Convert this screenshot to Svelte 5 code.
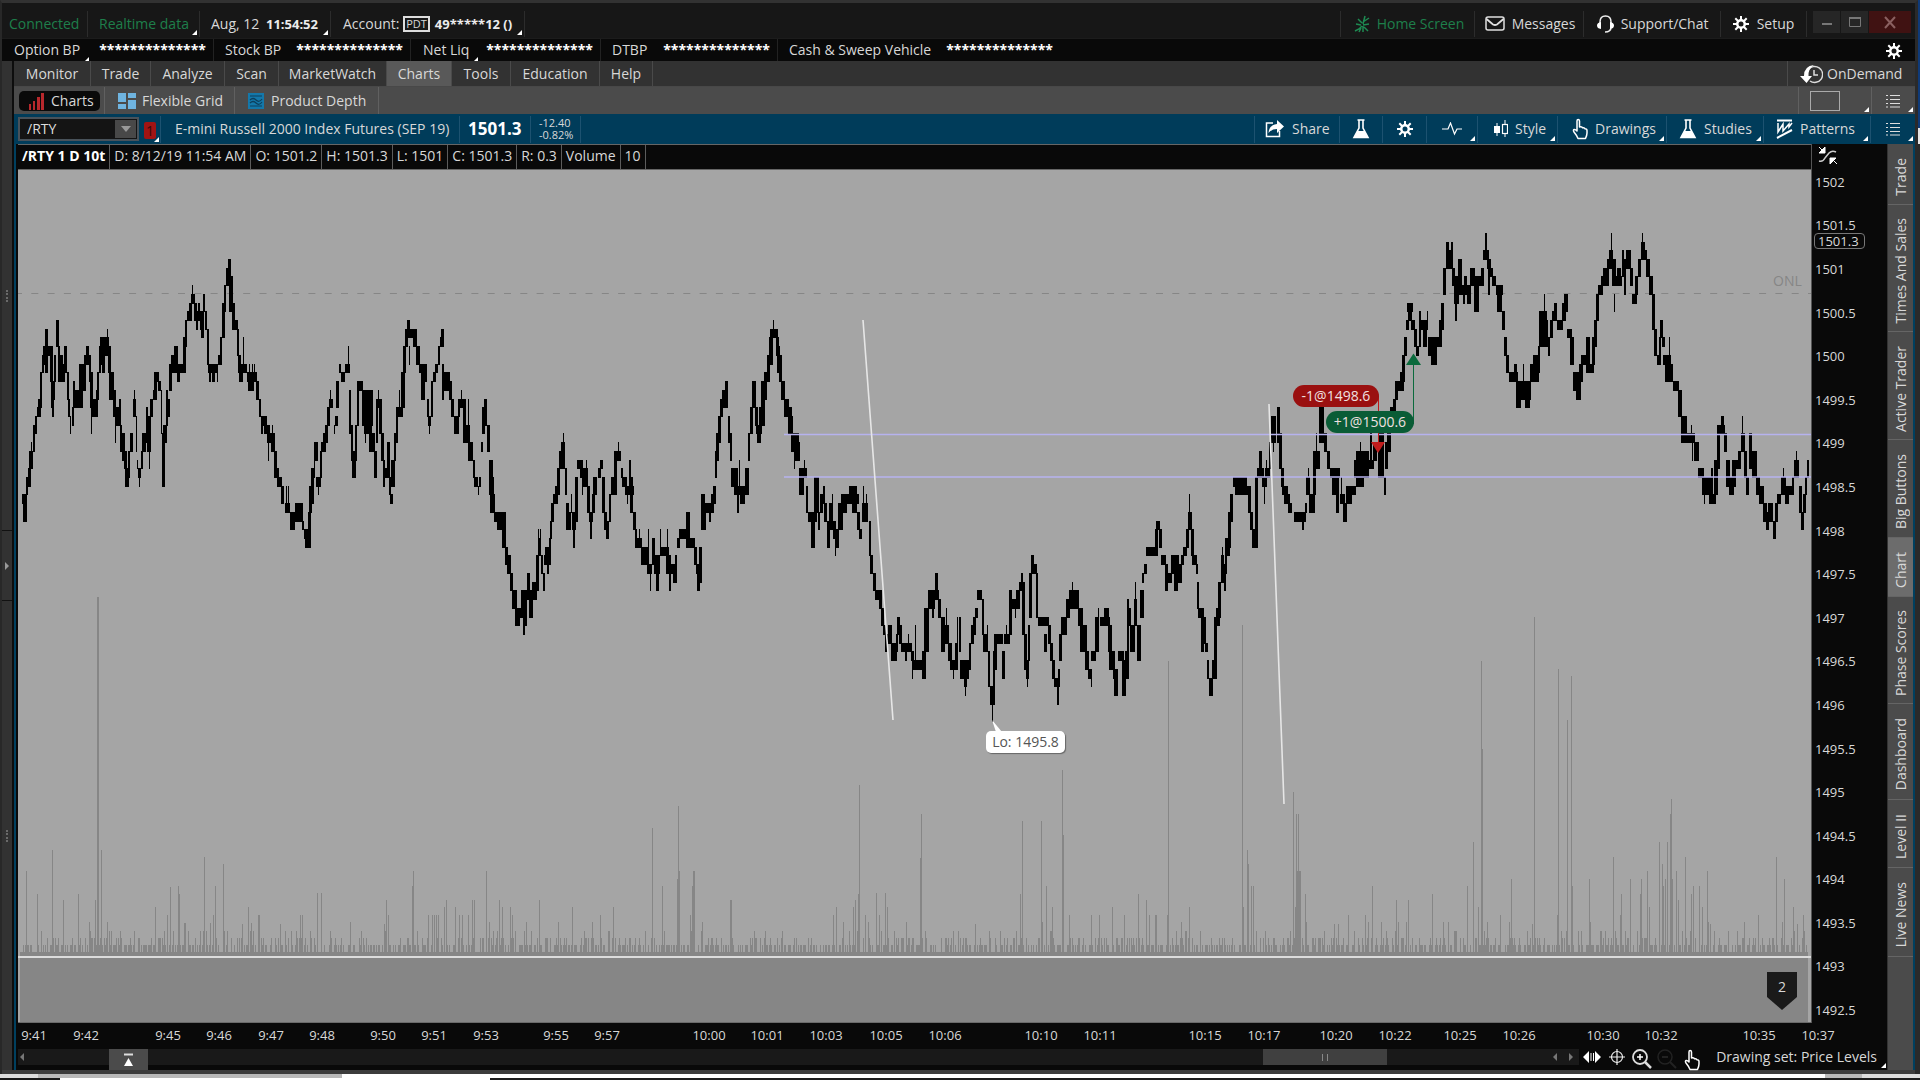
<script>
  const VIEW = { x: 18, y: 170, w: 1793, h: 853 };
  const MASK = '**************';

  // Price runs: left, right, high, low. Prices are tenths of a point above 1490.
  const RUNS = `
22 27 84 83,23 27 84 81,26 28 86 84,28 31 87 85,29 33 89 87,31 32 90 89,33 35 92 89,35 37 93 91,37 40 94 93,38 41 95 93,40 42 98 94,42 44 100 98,43 46 101 99,45 48 103 98,48 52 101 100,50 53 101 97,51 53 97 94,52 54 95 93,53 55 97 95,54 56 100 97,56 59 104 101,58 60 101 97,60 63 100 97,62 65 99 97,64 67 101 98,67 69 98 95,68 70 95 93,70 71 93 91,72 74 94 92,73 75 97 94,75 80 96 94,79 83 99 94,82 86 99 96,84 88 100 99,86 89 101 99,89 91 100 97,90 93 98 94,91 92 94 91,91 97 95 93,96 98 96 93,97 99 98 95,99 101 101 98,100 104 102 99,102 105 101 98,103 109 102 100,107 108 103 101,108 111 101 98,109 114 98 95,113 116 96 93,115 116 93 90,116 119 94 92,119 121 95 92,120 122 92 89,122 125 91 88,124 127 89 87,125 129 87 85,128 130 89 86,130 133 91 89,133 136 95 93,134 135 96 93,136 137 93 89,137 138 88 87,138 141 87 86,139 140 86 85,141 143 89 87,142 146 91 89,146 148 94 90,147 151 93 89,149 150 89 87,150 153 95 93,153 155 96 95,154 157 98 95,156 159 98 97,158 161 97 96,161 162 96 91,162 165 91 85,163 167 92 90,166 168 96 92,167 170 95 93,169 172 99 96,171 175 100 98,174 178 101 98,177 180 99 97,180 185 99 98,183 186 102 98,185 187 104 101,187 190 105 104,189 192 106 104,191 195 107 106,192 193 108 107,194 197 106 104,196 198 105 103,198 200 106 104,200 204 105 103,201 204 103 102,203 205 107 105,205 207 105 103,207 209 103 99,208 211 99 98,209 211 98 97,210 218 99 98,212 215 98 97,217 218 98 97,218 220 100 99,220 222 102 99,222 225 106 102,224 226 108 105,226 229 110 108,228 231 111 109,229 233 109 105,232 235 106 103,234 238 104 103,237 239 103 100,238 241 100 98,239 243 99 97,243 244 102 98,243 247 99 98,247 257 98 97,248 254 98 96,249 250 99 98,252 253 99 98,254 255 99 98,256 259 97 95,259 261 95 93,261 263 93 91,262 267 93 92,264 270 92 91,267 275 91 90,268 269 91 88,272 273 92 91,271 275 91 89,274 277 89 86,275 279 87 86,277 282 86 85,281 284 85 83,286 287 85 83,288 289 85 83,285 290 83 82,290 295 82 80,295 303 83 81,302 304 81 80,304 306 80 79,305 311 80 78,308 311 82 79,309 312 85 82,311 314 87 83,314 315 90 86,315 318 90 88,316 321 86 85,318 319 86 84,320 322 89 86,321 326 90 89,323 326 91 89,325 328 92 90,327 330 94 92,329 333 95 94,330 331 96 94,334 335 92 91,335 338 93 92,336 339 97 94,339 341 99 98,341 345 98 97,345 350 99 98,348 349 101 98,349 351 96 91,351 353 92 88,352 356 89 86,355 357 92 88,357 359 97 92,358 363 97 96,362 373 96 92,364 371 92 91,365 366 91 90,369 372 92 89,372 375 91 89,374 377 89 86,376 378 95 90,378 379 96 94,379 382 95 91,381 384 91 88,383 385 88 85,385 389 87 86,387 390 90 86,389 391 86 84,390 393 84 83,391 395 88 85,394 396 91 88,396 398 94 90,398 403 94 93,399 400 96 94,401 405 98 94,403 406 101 98,405 408 103 101,407 410 104 102,409 415 103 102,409 410 101 99,413 417 103 101,416 420 101 99,419 427 99 98,421 425 98 95,424 427 98 97,427 429 95 93,428 431 93 92,429 430 92 91,431 433 97 93,433 436 98 97,435 438 99 98,438 440 101 99,440 443 102 101,441 444 103 101,442 444 99 95,444 450 98 96,449 452 97 95,451 454 95 93,454 459 93 91,458 460 95 93,460 465 95 94,461 462 96 94,463 466 95 90,466 470 92 90,468 469 95 92,468 473 90 88,473 475 88 86,474 478 86 85,478 479 85 84,479 481 86 85,481 483 90 89,482 485 94 91,484 487 95 92,487 490 92 89,489 493 88 84,490 494 86 82,492 495 84 82,494 499 82 81,497 501 82 80,499 506 82 80,502 506 80 78,505 508 78 76,507 511 77 75,510 513 75 73,512 515 73 71,515 517 73 69,517 520 71 69,519 524 71 70,521 527 73 71,523 525 70 68,524 527 71 69,527 530 75 72,529 533 73 70,532 537 74 72,536 539 77 73,538 541 79 77,538 539 80 78,540 541 80 78,541 543 77 75,543 545 75 73,544 547 77 76,545 551 78 76,547 549 76 75,549 551 79 77,550 552 81 79,551 554 83 81,553 557 84 83,555 558 85 83,557 560 87 84,559 562 89 87,561 565 90 87,563 564 91 90,565 567 87 84,566 569 83 80,568 571 82 80,571 572 84 82,572 576 82 80,573 575 80 78,575 578 86 81,577 583 88 87,580 583 88 86,582 588 87 85,586 587 88 87,582 583 85 84,587 590 85 82,589 593 82 81,590 592 81 79,592 595 84 82,593 597 86 84,598 601 87 86,600 603 88 87,602 605 86 82,604 607 82 80,606 609 81 79,609 611 84 81,611 615 86 84,614 617 89 84,615 621 89 88,618 619 90 89,621 623 87 86,622 627 86 85,625 634 85 84,630 633 86 84,629 631 88 85,627 628 84 83,630 633 84 82,633 636 82 80,635 637 80 78,637 642 79 78,639 640 80 79,641 649 78 76,648 649 80 78,647 652 76 75,650 651 75 73,652 655 79 76,654 660 77 75,656 659 75 73,660 661 80 77,661 669 78 77,667 668 80 77,666 671 77 75,668 677 76 75,669 671 75 73,673 677 75 74,675 677 77 75,677 680 79 78,679 687 80 79,686 690 82 78,689 695 79 78,694 697 78 76,696 701 76 75,697 700 75 73,699 702 78 74,701 705 84 80,703 712 83 82,705 706 82 80,709 711 82 81,711 714 84 82,713 716 85 83,715 717 89 86,716 719 91 88,718 721 93 90,720 723 95 93,722 726 96 94,725 728 97 94,728 730 93 90,730 732 91 88,731 735 87 85,734 738 87 84,739 740 88 85,737 741 85 84,737 739 84 82,740 745 85 83,745 749 87 84,748 750 91 88,750 753 94 91,752 756 97 94,755 758 94 92,756 762 92 91,757 761 92 90,759 761 94 92,761 765 97 92,764 767 98 95,767 770 100 97,769 773 102 99,770 778 103 102,773 774 104 102,776 779 102 100,777 779 100 98,779 782 100 97,779 780 101 100,781 785 97 95,784 789 95 93,787 792 94 93,788 793 93 91,791 799 91 89,794 800 90 88,794 795 88 87,799 807 87 86,804 805 88 87,799 804 86 84,806 808 85 82,808 815 82 81,811 815 81 78,814 817 86 81,817 819 86 82,818 820 82 80,820 823 84 82,823 825 85 83,824 827 83 81,827 830 81 78,829 833 83 80,832 833 84 82,833 836 81 79,835 836 79 77,836 839 80 78,838 843 83 80,841 847 84 82,846 859 84 83,849 857 85 83,852 857 83 82,857 860 82 80,859 862 80 79,862 868 83 81,863 864 85 83,866 867 84 82,869 871 81 77,870 873 77 75,873 876 75 73,875 880 73 72,879 882 73 71,881 884 71 69,883 886 69 68,885 888 68 66,888 892 69 67,891 897 67 65,896 898 68 66,897 900 70 68,899 902 69 67,901 912 67 66,905 907 66 65,908 909 68 67,911 914 66 65,912 917 65 64,915 916 69 65,917 924 65 64,912 913 64 63,922 926 66 63,924 929 71 66,928 935 73 71,932 934 71 70,933 939 73 72,935 938 75 72,938 941 72 70,941 945 70 66,944 949 69 67,946 947 71 69,948 952 67 65,950 955 65 64,953 954 64 63,955 958 67 64,957 958 70 67,959 961 70 66,960 969 65 63,964 967 63 62,965 966 62 61,969 971 67 64,971 974 69 67,973 976 70 68,975 978 71 70,977 982 73 72,982 984 72 68,983 988 68 66,987 988 69 67,988 990 66 62,990 993 62 60,992 993 60 58,993 995 66 60,994 997 68 64,996 1003 68 67,1002 1005 66 63,1004 1010 68 67,1006 1007 69 68,1009 1012 73 68,1011 1017 72 71,1015 1016 71 70,1016 1020 73 71,1019 1022 74 73,1021 1023 75 74,1022 1025 74 68,1024 1027 68 64,1026 1029 65 63,1027 1028 63 62,1028 1030 69 65,1029 1032 75 70,1031 1034 77 75,1033 1037 76 75,1036 1038 75 70,1038 1049 70 69,1044 1047 68 66,1048 1051 69 67,1050 1053 67 65,1052 1055 65 63,1054 1058 63 62,1057 1059 62 60,1058 1060 64 62,1059 1062 68 65,1061 1067 70 68,1066 1070 72 70,1069 1079 73 71,1072 1073 74 73,1078 1083 71 69,1080 1082 69 66,1082 1087 69 66,1085 1089 66 64,1088 1092 64 63,1091 1092 63 62,1091 1096 66 65,1095 1099 70 66,1098 1099 71 70,1100 1110 70 69,1104 1109 71 69,1108 1112 69 66,1109 1115 66 64,1113 1115 64 63,1114 1118 64 61,1118 1124 66 65,1122 1126 65 61,1125 1129 66 63,1127 1129 72 66,1129 1131 71 69,1130 1135 69 66,1134 1137 72 69,1135 1136 74 71,1137 1141 69 65,1140 1144 73 70,1142 1144 75 74,1144 1147 76 75,1146 1155 78 77,1155 1158 80 77,1156 1160 81 80,1159 1162 80 78,1161 1166 77 76,1165 1168 76 73,1167 1172 75 74,1171 1174 77 75,1173 1179 77 75,1174 1178 75 73,1177 1182 76 74,1181 1184 77 76,1183 1187 78 77,1186 1189 80 78,1188 1192 82 80,1189 1190 84 82,1191 1194 80 77,1192 1197 77 76,1196 1198 76 75,1197 1199 74 71,1198 1204 71 70,1201 1204 70 66,1203 1206 70 67,1205 1208 67 66,1207 1209 65 63,1209 1213 63 61,1212 1216 65 63,1214 1217 70 63,1216 1220 71 69,1218 1221 74 70,1221 1224 77 74,1222 1223 78 77,1224 1226 76 73,1225 1227 79 75,1227 1230 79 77,1228 1231 82 78,1230 1233 84 81,1233 1247 86 85,1235 1247 85 84,1246 1251 85 84,1248 1251 84 82,1250 1253 82 80,1252 1256 80 78,1255 1258 86 78,1257 1264 87 86,1259 1262 89 86,1262 1266 86 85,1264 1265 85 83,1265 1270 87 86,1266 1267 88 85,1269 1271 90 87,1271 1276 93 90,1273 1274 92 89,1277 1280 94 90,1279 1282 91 87,1281 1284 87 85,1282 1288 85 84,1284 1290 84 83,1288 1292 83 82,1294 1306 82 81,1302 1304 81 80,1305 1307 83 82,1306 1310 86 84,1308 1309 87 86,1309 1315 84 82,1313 1316 89 84,1315 1320 89 87,1316 1317 91 88,1319 1324 94 90,1324 1327 91 89,1327 1330 89 87,1330 1340 87 86,1332 1339 86 84,1336 1339 84 82,1340 1345 84 83,1341 1342 86 83,1343 1347 83 81,1346 1352 85 83,1351 1356 85 84,1354 1364 88 86,1356 1364 89 85,1360 1361 90 89,1363 1374 88 87,1364 1369 89 86,1370 1372 91 88,1373 1377 90 88,1378 1384 91 86,1384 1386 86 84,1385 1388 90 87,1387 1391 91 89,1390 1395 94 92,1393 1396 95 93,1395 1398 97 95,1397 1404 97 96,1400 1402 98 97,1402 1405 100 97,1404 1407 102 100,1406 1409 104 103,1407 1413 106 105,1408 1412 105 104,1411 1415 104 103,1414 1417 103 101,1416 1419 101 100,1419 1421 105 101,1420 1428 104 103,1427 1428 105 104,1423 1427 103 101,1428 1432 102 100,1430 1437 101 100,1431 1437 102 99,1436 1441 102 101,1439 1442 104 101,1441 1444 106 103,1443 1446 110 107,1446 1453 112 110,1446 1449 113 111,1451 1453 113 111,1452 1455 110 108,1454 1459 109 106,1455 1457 106 104,1458 1462 111 107,1461 1471 108 107,1464 1467 109 107,1463 1465 107 106,1467 1471 107 106,1470 1475 110 108,1474 1479 109 105,1479 1482 109 108,1481 1484 110 108,1483 1489 112 111,1485 1487 114 111,1487 1491 111 110,1488 1490 110 107,1490 1493 110 109,1492 1496 109 108,1496 1503 108 107,1497 1502 107 105,1502 1505 105 103,1504 1507 102 100,1506 1509 100 98,1509 1518 98 97,1514 1517 99 97,1516 1521 97 94,1521 1531 97 95,1523 1524 99 97,1525 1530 95 94,1530 1535 99 97,1533 1539 100 97,1538 1540 101 98,1539 1547 105 101,1544 1545 107 105,1546 1548 104 101,1548 1550 102 100,1550 1553 104 102,1552 1554 105 104,1554 1557 106 104,1557 1563 104 103,1562 1566 106 104,1564 1568 107 105,1567 1572 103 102,1570 1574 102 99,1573 1577 98 96,1576 1581 98 95,1579 1583 99 97,1581 1587 100 99,1586 1590 102 98,1588 1594 99 98,1592 1595 102 99,1594 1597 104 101,1596 1599 107 104,1598 1603 108 107,1601 1603 109 108,1603 1609 110 108,1607 1614 111 110,1609 1613 112 110,1611 1612 114 112,1612 1616 111 108,1614 1615 107 105,1615 1622 109 108,1617 1621 110 108,1622 1624 112 109,1624 1626 111 107,1626 1631 112 110,1630 1633 110 108,1632 1637 107 106,1635 1638 109 107,1638 1641 111 109,1641 1647 112 111,1641 1645 113 111,1642 1643 114 113,1646 1650 111 109,1649 1653 109 107,1652 1655 107 103,1654 1657 103 100,1657 1661 100 99,1659 1661 102 100,1660 1663 104 102,1662 1665 102 101,1663 1671 100 99,1665 1669 100 97,1669 1670 102 99,1669 1673 99 97,1673 1679 97 96,1678 1682 96 93,1681 1687 93 90,1687 1695 91 90,1691 1692 92 91,1692 1693 90 88,1694 1699 90 88,1698 1704 87 86,1702 1706 86 84,1704 1705 84 83,1706 1711 86 84,1709 1716 84 83,1711 1713 87 84,1714 1718 88 84,1717 1720 92 87,1719 1725 92 91,1721 1724 93 91,1724 1727 91 89,1726 1730 88 85,1729 1734 86 84,1732 1736 88 85,1735 1739 88 87,1738 1741 89 87,1741 1745 91 89,1742 1743 93 91,1744 1747 89 86,1746 1749 86 84,1749 1752 91 87,1752 1757 89 86,1756 1760 86 84,1759 1764 85 83,1763 1767 83 81,1766 1769 82 80,1768 1773 83 81,1773 1776 81 79,1775 1778 83 81,1777 1781 84 83,1781 1786 86 84,1783 1784 87 86,1785 1789 85 83,1788 1794 85 84,1792 1794 86 84,1794 1799 88 86,1796 1797 89 88,1799 1802 85 82,1801 1804 82 80,1803 1806 84 82,1805 1807 86 84,1807 1809 88 86`;

  const priceY = (v) => Math.round(259 + (111 - v) * 8.72);
  const pricePath = RUNS.trim().split(',').map((r) => {
    const [a, b, hi, lo] = r.split(' ').map(Number);
    return `M${a} ${priceY(hi)}H${b}V${priceY(lo) + 1}H${a}Z`;
  }).join('');

  // Volume peaks: x, top.
  const PEAKS = '26 871,52 850,37 894,63 900,78 894,97 597,98 597,101 850,95 900,89 922,107 922,155 907,170 887,178 886,179 894,185 923,184 923,167 915,204 857,215 886,223 864,213 915,210 923,248 907,259 915,258 915,251 923,300 915,302 915,317 893,321 893,350 922,386 900,388 915,413 871,412 886,428 915,432 915,434 915,436 915,438 915,444 907,446 900,455 907,459 915,462 915,472 900,474 900,468 915,486 871,489 922,499 900,502 907,510 907,512 915,526 922,539 900,558 922,572 907,600 915,592 922,613 907,652 828,662 886,678 806,677 879,679 871,693 871,694 871,692 886,690 915,702 922,730 900,731 900,836 907,833 915,843 922,855 900,853 907,859 785,858 894,865 915,868 922,876 893,885 893,887 907,879 915,906 922,921 814,920 858,1022 821,1020 894,1041 821,1042 922,1046 886,1052 907,1062 770,1063 835,1069 915,1091 915,1099 915,1112 907,1124 915,1138 894,1146 900,1149 915,1155 915,1156 915,1167 915,1168 661,1189 907,1181 922,1242 625,1247 850,1248 864,1251 886,1253 886,1243 907,1293 792,1296 814,1298 814,1297 871,1299 871,1300 871,1295 907,1305 894,1306 922,1348 915,1372 886,1365 915,1368 922,1381 922,1396 900,1398 922,1406 922,1408 900,1432 894,1443 922,1448 922,1467 886,1473 842,1481 661,1482 749,1478 907,1487 922,1500 915,1511 879,1509 922,1534 617,1557 915,1558 669,1567 720,1571 676,1572 886,1589 879,1590 922,1613 857,1620 915,1621 894,1630 879,1641 879,1640 894,1647 871,1649 907,1659 842,1662 864,1663 886,1665 879,1667 842,1670 814,1671 799,1672 879,1676 871,1678 900,1685 857,1691 894,1693 886,1699 886,1702 907,1707 871,1708 922,1744 922,1758 915,1776 857,1782 922,1784 879,1793 907,1803 915';

  // Background volume: every bar is a whole number of lots, mostly one to three.
  let seed = 20190812;
  const random = () => (seed = (seed * 1103515245 + 12345) % 2147483648) / 2147483648;
  let volumePath = 'M20 952H1808V956H20Z';
  for (let i = 0; i < 1420; i++) {
    const r = random();
    const lots = r < 0.28 ? 0 : r < 0.7 ? 1 : r < 0.91 ? 2 : r < 0.99 ? 3 : 4;
    if (lots) volumePath += `M${Math.round(22 + i * 1.257)} ${952 - lots * 7}h1V956h-1Z`;
  }
  for (const p of PEAKS.split(',')) {
    const [x, top] = p.split(' ').map(Number);
    volumePath += `M${x} ${top}h1V956h-1Z`;
  }

  const left = (x) => `${((x - VIEW.x) / VIEW.w) * 100}%`;
  const top = (y) => `${((y - VIEW.y) / VIEW.h) * 100}%`;

  const prices = Array.from({ length: 20 }, (_, i) => 1502 - i * 0.5);
  const AXIS_W = 1869;
  const times = [['9:41', 34], ['9:42', 86], ['9:45', 168], ['9:46', 219], ['9:47', 271], ['9:48', 322], ['9:50', 383], ['9:51', 434], ['9:53', 486], ['9:55', 556], ['9:57', 607], ['10:00', 709], ['10:01', 767], ['10:03', 826], ['10:05', 886], ['10:06', 945], ['10:10', 1041], ['10:11', 1100], ['10:15', 1205], ['10:17', 1264], ['10:20', 1336], ['10:22', 1395], ['10:25', 1460], ['10:26', 1519], ['10:30', 1603], ['10:32', 1661], ['10:35', 1759], ['10:37', 1818]];

  const balances = [['Option BP', 'w-option', true], ['Stock BP', 'w-stock', false], ['Net Liq', 'w-liq', true], ['DTBP', 'w-dtbp', false], ['Cash & Sweep Vehicle', 'w-cash', false]];
  const menus = ['Monitor', 'Trade', 'Analyze', 'Scan', 'MarketWatch', 'Charts', 'Tools', 'Education', 'Help'];
  const legend = ['D: 8/12/19 11:54 AM', 'O: 1501.2', 'H: 1501.3', 'L: 1501', 'C: 1501.3', 'R: 0.3', 'Volume', '10'];
  const gadgets = [['Trade', 't60'], ['Times And Sales', 't128'], ['Active Trader', 't108'], ['Big Buttons', 't98'], ['Chart', 't59'], ['Phase Scores', 't107'], ['Dashboard', 't96'], ['Level II', 't68'], ['Live News', 't89']];
  let symbol = $state('/RTY');
</script>

{#snippet gear()}
  <svg class="icon" width="18" height="18" viewBox="0 0 18 18" aria-hidden="true">
    <g stroke="#fff" stroke-width="2"><path d="M9 1v16M1 9h16M3.300 3.300l11.400 11.400M14.700 3.300L3.300 14.700" /></g>
    <circle cx="9" cy="9" r="5" fill="#fff" /><circle cx="9" cy="9" r="2.500" class="hole" />
  </svg>
{/snippet}
{#snippet flask()}
  <svg class="icon" width="18" height="22" viewBox="0 0 18 22" aria-hidden="true">
    <path d="M5.500 2h7M7 2v8L2 19.500h14L11 10V2" fill="none" stroke="#fff" stroke-width="1.600" />
    <path d="M5.500 13h7l3.500 7H2z" fill="#fff" />
  </svg>
{/snippet}
{#snippet hand()}
  <svg class="icon" width="16" height="22" viewBox="0 0 16 22" aria-hidden="true">
    <path d="M5 13V3q0-1.500 1.200-1.500T7.500 3v6q2.500-.7 3 .8 2-.5 2.500.9 2 0 2 1.800V15q0 2-1.500 5.500H6Q4.500 17 2 14q-1.200-2 .2-2.500Q3.500 11.300 5 13z" fill="none" stroke="#fff" stroke-width="1.500" stroke-linejoin="round" />
  </svg>
{/snippet}
{#snippet list()}
  <svg class="icon" width="14" height="14" viewBox="0 0 14 14" aria-hidden="true">
    <path d="M0 1.500h2M4 1.500h10M0 5.500h2M4 5.500h10M0 9.500h2M4 9.500h10M0 13h2M4 13h10" stroke="#ddd" />
  </svg>
{/snippet}

<div class="screen">
  <div class="window">
    <header class="status">
      <span class="cell green w-conn">Connected</span>
      <button class="cell green more w-real">Realtime data</button>
      <button class="cell more w-date">Aug, 12 <b>11:54:52</b></button>
      <button class="cell more w-acct">Account: <span class="pdt">PDT</span><b>49*****12 ()</b></button>
      <span class="grow"></span>
      <button class="cell green edge w-home">
        <svg class="icon" width="16" height="18" viewBox="0 0 16 18" aria-hidden="true"><path d="M9 9L11 1M9 7l6-4M9 10l6-1M10 12l4 4M8 8L4 4M7 10L2 9M8 11l-3 3-4 2M9 11v6M7 13l-2 4" stroke="#1e8a52" stroke-width="1.500" fill="none" /></svg>
        Home Screen</button>
      <button class="cell w-msg">
        <svg class="icon" width="20" height="16" viewBox="0 0 20 16" aria-hidden="true"><rect x="1" y="1" width="18" height="13" rx="2" fill="none" stroke="#e0e0e0" stroke-width="1.500" /><path d="M1.500 3L8 8.500q2 1 4 0L18.500 3" fill="none" stroke="#e0e0e0" stroke-width="1.800" /></svg>
        Messages</button>
      <button class="cell w-chat">
        <svg class="icon" width="17" height="20" viewBox="0 0 17 20" aria-hidden="true"><path d="M3 13V8q0-6 5.500-6T14 8v5q0 5-6 5" fill="none" stroke="#eee" stroke-width="1.500" /><path d="M4 8v7Q0 14.500 0 11.500T4 8zM13 8v7q4-.5 4-3.500T13 8z" fill="#fff" /></svg>
        Support/Chat</button>
      <button class="cell w-setup">{@render gear()} Setup</button>
      <div class="controls">
        <button aria-label="Minimize"><svg width="12" height="12" aria-hidden="true"><path d="M1 8h10" stroke="#777" stroke-width="2" /></svg></button>
        <button aria-label="Maximize"><svg width="14" height="12" aria-hidden="true"><path d="M1.500 2v8.500h11V2" stroke="#777" fill="none" /><path d="M1 2h12" stroke="#777" stroke-width="2" /></svg></button>
        <button class="close" aria-label="Close"><svg width="12" height="13" aria-hidden="true"><path d="M1 1l10 11M11 1L1 12" stroke="#8a6060" stroke-width="2" /></svg></button>
      </div>
    </header>

    <div class="balances">
      {#each balances as [name, cls, more]}
        <div class="balance {cls}"><span class:more>{name}</span><b>{MASK}</b></div>
      {/each}
      <span class="grow"></span>
      <button class="tool" aria-label="Balance settings">{@render gear()}</button>
    </div>

    <div class="body">
      <aside class="rail">
        <div class="grip"><i></i></div>
        <button aria-label="Expand left sidebar"><svg width="4" height="8" aria-hidden="true"><path d="M0 0l4 4-4 4z" fill="#999" /></svg></button>
        <div class="grip low"><i></i></div>
      </aside>

      <main>
        <nav class="menus">
          {#each menus as name}
            <button class="m-{name.toLowerCase()}" class:active={name === 'Charts'}>{name}</button>
          {/each}
          <span class="grow"></span>
          <button class="demand">
            <svg class="icon" width="23" height="20" viewBox="0 0 23 20" aria-hidden="true"><path d="M8 6a8 8 0 1 1 2 11" fill="none" stroke="#ddd" stroke-width="1.500" /><path d="M14 6v5h4" fill="none" stroke="#ddd" stroke-width="1.500" /><path d="M14 1Q4 2 4 12H0l6.500 7L12 12H8.500Q8 5 14 1z" fill="#fff" /></svg>
            OnDemand</button>
        </nav>

        <nav class="views">
          <div class="view first"><button class="pill">
            <svg width="16" height="18" viewBox="0 0 16 18" aria-hidden="true"><path d="M1 12h2v6H1zM5 9h2v9H5zM9 5h3v13H9zM13 1h3v17h-3z" fill="#b8282c" /></svg>
            Charts</button></div>
          <button class="view v-grid">
            <svg width="18" height="16" viewBox="0 0 18 16" aria-hidden="true"><path d="M0 0h8v9H0zM10 0h8v5h-8zM0 11h8v5H0zM10 7h8v9h-8z" fill="#6fb4e0" /></svg>
            Flexible Grid</button>
          <button class="view v-depth">
            <svg width="16" height="16" viewBox="0 0 16 16" aria-hidden="true"><rect width="16" height="16" fill="#1478aa" /><path d="M2 3h12M2 7q3-3 6 0t6-1M2 10q3-3 6 0t6-1M2 13h12" stroke="#0d3f5c" stroke-width="1.200" fill="none" /></svg>
            Product Depth</button>
          <span class="grow"></span>
          <button class="view v-layout more" aria-label="Grid layout"><i></i></button>
          <button class="view v-list more" aria-label="Layout list">{@render list()}</button>
        </nav>

        <div class="toolbar">
          <div class="symbol">
            <div class="combo"><input aria-label="Symbol" bind:value={symbol} /><button aria-label="Symbol list"><svg width="10" height="6" aria-hidden="true"><path d="M0 0h10L5 6z" fill="#999" /></svg></button></div>
            <button class="link more" aria-label="Link group 1"><span>1</span></button>
          </div>
          <span class="name">E-mini Russell 2000 Index Futures (SEP 19)</span>
          <b class="last">1501.3</b>
          <span class="change"><span>-12.40</span><span>-0.82%</span></span>
          <span class="grow"></span>
          <button class="act edge a-share">
            <svg class="icon" width="20" height="18" viewBox="0 0 20 18" aria-hidden="true"><path d="M8 3H1.500v13.500h13V11" fill="none" stroke="#fff" stroke-width="1.500" /><path d="M19 6.500L12 0v4Q4 5 3.500 13 6.500 9 12 9v4z" fill="#fff" /></svg>
            Share</button>
          <button class="act a-flask" aria-label="Lab">{@render flask()}</button>
          <button class="act a-gear" aria-label="Chart settings">{@render gear()}</button>
          <button class="act more a-pulse" aria-label="Patterns overlay"><svg width="20" height="14" viewBox="0 0 20 14" aria-hidden="true"><path d="M0 7h6l2.500-6 4 11L15 7h5" fill="none" stroke="#fff" stroke-width="1.200" /></svg></button>
          <button class="act more a-style">
            <svg class="icon" width="14" height="18" viewBox="0 0 14 18" aria-hidden="true"><path d="M3 3v13M11 0v17" stroke="#fff" /><path d="M0 6h6v7H0z" fill="#fff" /><rect x="8.500" y="4.500" width="5" height="9" fill="#003c5a" stroke="#fff" stroke-width="1.200" /></svg>
            Style</button>
          <button class="act more a-draw">{@render hand()} Drawings</button>
          <button class="act more a-study">{@render flask()} Studies</button>
          <button class="act more a-patt">
            <svg class="icon" width="17" height="20" viewBox="0 0 17 20" aria-hidden="true"><path d="M1 1.500h15M1 19L16 11" stroke="#fff" stroke-width="2" /><path d="M2 4v9L7 5v7l6-7v3l3-4" fill="none" stroke="#fff" stroke-width="1.500" /></svg>
            Patterns</button>
          <button class="act more a-list" aria-label="Toolbar list">{@render list()}</button>
        </div>

        <div class="work">
          <section class="chart">
            <div class="panes">
              <div class="left">
                <div class="legend"><b>/RTY 1 D 10t</b>{#each legend as item}<span>{item}</span>{/each}</div>
                <div class="plot">
                  <svg viewBox="18 170 1793 853" preserveAspectRatio="none" role="img" aria-label="/RTY price and volume">
                    <rect x="18" y="170" width="1793" height="853" fill="#a5a5a5" />
                    <rect x="20" y="958" width="1788" height="64" fill="#868686" />
                    <path d={volumePath} fill="#868686" shape-rendering="crispEdges" />
                    <path d="M18 293.500H1811" stroke="#868686" stroke-dasharray="7 9.300" stroke-dashoffset="3" />
                    <path d={pricePath} shape-rendering="crispEdges" />
                    <path d="M784 434.500H1811M784 477H1811" stroke="#b6b2ee" stroke-width="1.500" />
                    <path d="M863 320L893 720M1269 404L1284 804" stroke="#e6e6e6" stroke-width="1.600" />
                    <path d="M18 957H1811" stroke="#dcdcdc" stroke-width="2" />
                    <path d="M1378.500 396V442" stroke="#c01818" /><path d="M1371 442h14l-7 11z" fill="#c01c1c" />
                    <path d="M1413.500 364V424" stroke="#0a6a3c" /><path d="M1406 365h15l-7.500-11.500z" fill="#0a6a3c" />
                    <path d="M992 720l4 12h6z" fill="#fff" />
                    <path d="M18 1022.500H1811" stroke="#6a6a6a" />
                  </svg>
                  <span class="onl" style:left={left(1773)} style:top={top(272)}>ONL</span>
                  <span class="fill sell" style:left={left(1293)} style:top={top(385)}>-1@1498.6</span>
                  <span class="fill buy" style:left={left(1326)} style:top={top(411)}>+1@1500.6</span>
                  <span class="low" style:left={left(986)} style:top={top(731)}>Lo: 1495.8</span>
                  <span class="events" style:left={left(1767)} style:top={top(972)}>2</span>
                </div>
              </div>
              <div class="prices">
                <svg width="20" height="20" viewBox="0 0 20 20" aria-hidden="true"><path d="M1 1l6 6M7 1v6H1zM19 18l-6-6M12 18v-6h6z" fill="#fff" stroke="#fff" /><path d="M1 15q4 1 6-3l4-5q3-3 7-1" fill="none" stroke="#ccc" stroke-width="1.500" /></svg>
                <div class="ticks">{#each prices as p}<span>{p}</span>{/each}</div>
                <span class="now">1501.3</span>
              </div>
            </div>
            <div class="times">{#each times as [t, x]}<span style:left={`${((x - 18) / AXIS_W) * 100}%`}>{t}</span>{/each}</div>
            <footer>
              <div class="scroll">
                <button class="arrow" aria-label="Scroll to start"><svg width="4" height="8" aria-hidden="true"><path d="M4 0L0 4l4 4z" fill="#777" /></svg></button>
                <button class="up" aria-label="Show panel"><svg width="11" height="14" aria-hidden="true"><path d="M1 1.500h9" stroke="#ddd" stroke-width="2" /><path d="M5.500 5L10 13H1z" fill="#fff" /></svg></button>
                <span class="grow"></span>
                <div class="thumb"><i></i></div>
                <button class="arrow s" aria-label="Scroll left"><svg width="4" height="8" aria-hidden="true"><path d="M4 0L0 4l4 4z" fill="#777" /></svg></button>
                <button class="arrow s" aria-label="Scroll right"><svg width="4" height="8" aria-hidden="true"><path d="M0 0l4 4-4 4z" fill="#777" /></svg></button>
              </div>
              <button class="tool" aria-label="Fit width"><svg width="18" height="12" viewBox="0 0 18 12" aria-hidden="true"><path d="M0 6l6-6v12zM18 6l-6-6v12z" fill="#fff" /><path d="M8 2v8M10.500 2v8" stroke="#fff" /></svg></button>
              <button class="tool" aria-label="Crosshair"><svg width="16" height="16" viewBox="0 0 16 16" aria-hidden="true"><circle cx="8" cy="8" r="5.500" fill="none" stroke="#eee" stroke-width="1.200" /><path d="M8 0v16M0 8h16" stroke="#eee" stroke-width="1.200" /></svg></button>
              <button class="tool" aria-label="Zoom in"><svg width="20" height="20" viewBox="0 0 20 20" aria-hidden="true"><circle cx="8" cy="8" r="7" fill="none" stroke="#ddd" stroke-width="1.800" /><path d="M13 13l6 6" stroke="#ddd" stroke-width="2.500" /><path d="M8 5v6M5 8h6" stroke="#fff" stroke-width="1.500" /></svg></button>
              <button class="tool" aria-label="Zoom out" disabled><svg width="20" height="20" viewBox="0 0 20 20" aria-hidden="true"><circle cx="8" cy="8" r="7" fill="none" stroke="#222" stroke-width="1.500" /><path d="M13 13l6 6M5 8h6" stroke="#222" stroke-width="2" /></svg></button>
              <button class="tool" aria-label="Pan">{@render hand()}</button>
              <button class="set more">Drawing set: Price Levels</button>
            </footer>
          </section>
          <aside class="gadgets">
            {#each gadgets as [name, cls]}<button class={cls} class:active={name === 'Chart'}><span>{name}</span></button>{/each}
          </aside>
        </div>
      </main>
    </div>
  </div>
  <div class="desk one"><i></i><i></i><i></i><i></i><i></i></div>
  <div class="desk two"><i></i><i></i><i></i></div>
</div>

<style>
  :global(body) { margin: 0; background: #222; }
  .screen { display: flex; flex-direction: column; height: 100vh; min-height: 700px; overflow: hidden; font: 14px/18px "Open Sans", "Noto Sans", sans-serif; color: #d8d8d8; background: linear-gradient(#0f3a78 128px, #e4e4e4 128px, #e4e4e4 144px, #2a2a2a 144px); }
  .screen *, .screen { box-sizing: border-box; }
  button { font: inherit; color: inherit; background: none; border: 0; padding: 0; white-space: nowrap; }
  svg { display: block; flex: none; }
  .hole { fill: #171717; }
  .grow { flex: 1; }
  .more { position: relative; }
  .more::after { content: ''; position: absolute; right: 2px; bottom: 2px; border-style: solid; border-width: 0 0 5px 5px; border-color: transparent transparent #fff; }
  .window { flex: 1; min-height: 0; display: flex; flex-direction: column; margin-right: 2px; border-top: 3px solid #323232; border-right: 3px solid #2a2a2a; border-left: 2px solid #282828; background: #171717; }

  .status { display: flex; height: 35px; padding-top: 8px; flex: none; }
  .cell { display: flex; align-items: center; height: 26px; padding-left: 12px; border-right: 1px solid #2c2c2c; flex: none; white-space: pre; }
  .edge { border-left: 1px solid #2c2c2c; }
  .green { color: #1e7f4b; }
  b { color: #fff; font-weight: 700; }
  .cell b { color: #ececec; }
  .w-conn { width: 86px; padding-left: 7px; }
  .w-real { width: 112px; padding-left: 11px; }
  .w-date { width: 131px; padding-left: 11px; }
  .w-date b { margin-left: 3px; font-size: 13px; }
  .w-acct { width: 194px; }
  .w-acct b { font-size: 13px; }
  .pdt { border: 2px solid #ddd; font-size: 11px; line-height: 12px; padding: 0 1px; margin-right: 5px; }
  .cell .icon { margin-right: 3px; }
  .w-home { width: 135px; padding-left: 13px; }
  .w-msg { width: 109px; padding-left: 10px; }
  .w-chat { width: 137px; padding-left: 13px; }
  .w-setup { width: 86px; padding-left: 11px; }
  .controls { display: flex; gap: 1px; padding: 0 4px 0 6px; }
  .controls button { width: 27px; height: 22px; background: #262626; display: grid; place-items: center; }
  .controls .close { width: 42px; background: #401212; }

  .balances { display: flex; align-items: center; height: 23px; flex: none; background: #090909; border-top: 1px solid #1c1c1c; padding-right: 9px; }
  .balance { display: flex; justify-content: space-between; align-items: center; height: 22px; padding: 0 7px 0 11px; border-right: 1px solid #222; flex: none; }
  .balance .more { padding-right: 9px; }
  .balance .more::after { right: 0; bottom: -2px; border-width: 0 0 4px 4px; }
  .w-option { width: 212px; padding-left: 12px; }
  .w-stock { width: 197px; }
  .w-liq { width: 190px; padding-left: 12px; }
  .w-dtbp { width: 177px; }
  .w-cash { width: 282px; border: 0; }

  .body { flex: 1; display: flex; min-height: 0; background: #323232; border-bottom: 4px solid #3c3c3c; }
  .rail { width: 12px; flex: none; display: flex; flex-direction: column; border-right: 2px solid #0d0d0d; }
  .rail .grip { height: 469px; display: grid; place-items: center; }
  .rail .grip.low { flex: 1; }
  .rail i { width: 2px; height: 12px; border-left: 2px dotted #6a6a6a; }
  .rail button { height: 71px; display: grid; place-items: center; border: solid #111; border-width: 1px 0; }
  main { flex: 1; min-width: 0; display: flex; flex-direction: column; }

  .menus { display: flex; height: 26px; flex: none; background: #323232; border-bottom: 1px solid #484848; }
  .menus button { border-right: 1px solid #4a4a4a; padding: 0 4px; }
  .menus .active { background: #595959; }
  .m-monitor { width: 77px; } .m-trade { width: 60px; } .m-analyze { width: 74px; } .m-scan { width: 54px; }
  .m-marketwatch { width: 108px; } .m-charts { width: 65px; } .m-tools { width: 59px; } .m-education { width: 89px; } .m-help { width: 53px; }
  .menus .demand { display: flex; align-items: center; gap: 4px; border: 0; border-left: 1px solid #4a4a4a; width: 128px; padding: 0 0 0 12px; }

  .views { display: flex; height: 27px; flex: none; background: #4b4b4b; }
  .view { display: flex; align-items: center; border-right: 1px solid #606060; }
  .first { width: 91px; padding-left: 5px; }
  .pill { display: flex; align-items: center; gap: 7px; width: 81px; height: 20px; padding-left: 9px; background: #0a0a0a; border-radius: 5px; }
  .v-grid { width: 130px; padding-left: 13px; gap: 6px; }
  .v-depth { width: 144px; padding-left: 13px; gap: 7px; }
  .v-layout { width: 74px; border-left: 1px solid #606060; padding-left: 11px; }
  .v-layout i { width: 30px; height: 20px; border: 1px solid #aaa; }
  .v-list { width: 43px; border: 0; padding-left: 14px; }

  .toolbar { display: flex; align-items: center; height: 30px; flex: none; background: #003c5a; }
  .toolbar > * { height: 27px; border-right: 1px solid #1d5270; display: flex; align-items: center; flex: none; }
  .toolbar > .grow { flex: 1; border: 0; }
  .toolbar .hole { fill: #003c5a; }
  .symbol { width: 147px; padding-left: 4px; gap: 5px; }
  .combo { display: flex; width: 121px; height: 24px; padding: 1px; background: #141414; border: 2px solid #48525a; }
  .combo input { flex: 1; min-width: 0; border: 0; background: none; color: #ddd; font: inherit; padding: 0 0 0 6px; }
  .combo button { width: 21px; background: #484848; display: grid; place-items: center; }
  .link { width: 15px; height: 25px; padding: 2px 2px 0 0; }
  .link::after { right: 0; bottom: 0; }
  .link span { display: block; width: 12px; height: 17px; line-height: 17px; background: #a01414; color: #3a0808; border-radius: 2px; }
  .name { width: 299px; padding-left: 14px; white-space: nowrap; }
  .last { width: 71px; padding-left: 8px; font-size: 17px; }
  .toolbar .change { width: 50px; padding-left: 8px; flex-direction: column; justify-content: center; align-items: flex-start; font-size: 11px; line-height: 12px; }
  .toolbar .edge { border-left: 1px solid #1d5270; }
  .act .icon { margin-right: 7px; }
  .a-share { width: 86px; padding-left: 10px; }
  .toolbar .a-flask, .toolbar .a-gear, .toolbar .a-pulse { justify-content: center; }
  .a-flask { width: 43px; } .a-gear { width: 44px; } .a-pulse { width: 51px; }
  .a-flask .icon, .a-gear .icon { margin: 0; }
  .a-style { width: 80px; padding-left: 16px; } .a-draw { width: 109px; padding-left: 14px; }
  .a-study { width: 97px; padding-left: 12px; } .a-patt { width: 107px; padding-left: 12px; }
  .toolbar .a-list { width: 44px; padding-left: 15px; border: 0; }

  .work { flex: 1; min-height: 0; display: flex; border-left: 2px solid #00405f; background: #090909; }
  .chart { flex: 1; min-width: 0; display: flex; flex-direction: column; padding-left: 2px; }
  .panes { flex: 1; min-height: 0; display: flex; }
  .left { flex: 1; min-width: 0; display: flex; flex-direction: column; border-top: 1px solid #666; }
  .legend { display: flex; height: 25px; flex: none; border-bottom: 1px solid #666; }
  .legend > * { padding: 2px 4px 0; border-right: 1px solid #5c5c5c; white-space: nowrap; }
  .plot { position: relative; flex: 1; min-height: 0; }
  .plot svg { position: absolute; width: 100%; height: 100%; }
  .plot span { position: absolute; white-space: nowrap; }
  .onl { color: #868686; }
  .plot .fill { width: 86px; height: 22px; line-height: 22px; border-radius: 11px; text-align: center; color: #f0e0e0; }
  .plot .sell { background: #9a1010; }
  .plot .buy { background: #0a5c36; width: 88px; }
  .plot .low { width: 79px; height: 22px; line-height: 22px; border-radius: 5px; background: #fff; color: #555; text-align: center; box-shadow: 1px 1px 1px #666; }
  .plot .events { width: 30px; height: 38px; line-height: 30px; text-align: center; background: #1a1a1a; clip-path: polygon(0 0, 100% 0, 100% 66%, 50% 100%, 0 66%); }
  .prices { position: relative; width: 76px; flex: none; display: flex; flex-direction: column; border-left: 1px solid #555; padding-left: 3px; font-size: 13px; }
  .prices svg { margin: 2px 0 -6px 3px; }
  .ticks { flex: 1; display: flex; flex-direction: column; margin-bottom: -9px; }
  .ticks span { flex: 1; display: flex; align-items: center; }
  .now { position: absolute; left: 2px; top: 89px; width: 51px; height: 16px; line-height: 14px; padding-left: 3px; background: #090909; border: 1px solid #777; border-radius: 4px; }
  .times { position: relative; height: 26px; flex: none; font-size: 13px; }
  .times span { position: absolute; top: 3px; transform: translateX(-50%); }
  footer { display: flex; align-items: flex-start; height: 21px; flex: none; }
  .scroll { flex: 1; display: flex; height: 16px; background: #191919; }
  .arrow { width: 8px; display: grid; place-items: center; }
  .arrow.s { width: 16px; }
  .up { width: 39px; height: 21px; margin-left: 83px; display: grid; place-items: center; background: #4b4b4b; }
  .thumb { width: 124px; margin-right: 160px; background: #404040; display: grid; place-items: center; }
  .thumb i { width: 6px; height: 7px; border: solid #888; border-width: 0 1px; }
  .tool { width: 25px; height: 16px; display: grid; place-items: center; }
  .set { width: 183px; height: 19px; padding: 0 10px 3px 0; text-align: right; line-height: 16px; }
  .set::after { bottom: 0; right: 1px; }
  .gadgets { width: 28px; flex: none; background: #4b4b4b; border-right: 2px solid #00405f; border-left: 1px solid #333; display: flex; flex-direction: column; }
  .gadgets button { display: grid; place-items: center; padding-top: 6px; border-bottom: 1px solid #656565; flex: none; }
  .gadgets .active { background: #6c6c6c; }
  .gadgets span { writing-mode: vertical-rl; transform: rotate(180deg); }
  .t60 { height: 61px; } .t128 { height: 127px; } .t108 { height: 108px; } .t98 { height: 98px; } .t59 { height: 59px; }
  .t107 { height: 107px; } .t96 { height: 96px; } .t68 { height: 68px; } .t89 { height: 89px; }

  .desk { display: flex; flex: none; height: 4px; background: #fff; }
  .desk i { flex: 0 1 auto; }
  .one i:nth-child(1) { width: 38px; background: #ddd; } .one i:nth-child(2) { width: 304px; background: #b9b9b9; }
  .one i:nth-child(3) { flex: 1; } .one i:nth-child(4) { width: 37px; background: #b9b9b9; } .one i:nth-child(5) { width: 58px; background: #ddd; }
  .two { height: 2px; }
  .two i:nth-child(1) { width: 60px; background: #181818; } .two i:nth-child(2) { width: 430px; } .two i:nth-child(3) { flex: 1; background: #1c1c1c; }
</style>
